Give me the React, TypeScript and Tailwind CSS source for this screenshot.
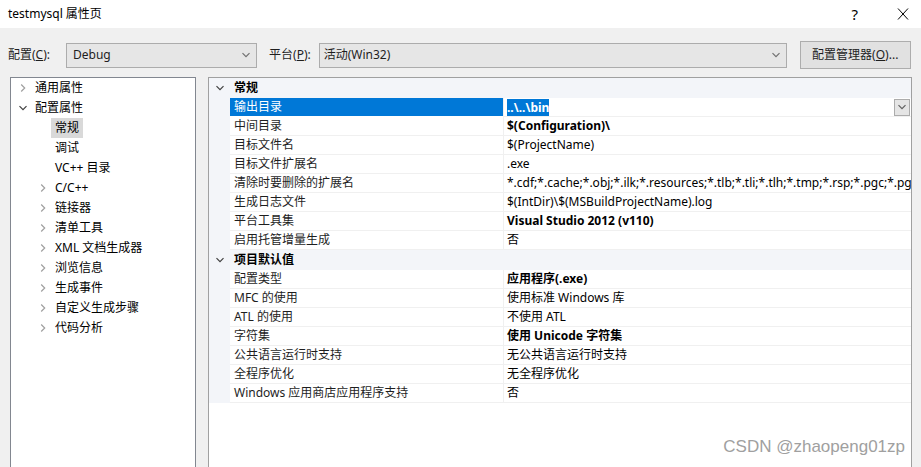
import React from 'react'

const FONT = { fontFamily: '"Noto Sans", "Noto Sans CJK SC", sans-serif' }

function Chevron({ open, className = '' }: { open?: boolean; className?: string }) {
  return (
    <svg width="10" height="10" viewBox="0 0 10 10" className={className} fill="none" stroke="currentColor" strokeWidth={1.2}>
      {open ? <path d="M1.5 3.2 5 6.7 8.5 3.2" /> : <path d="M3.2 1.5 6.7 5 3.2 8.5" />}
    </svg>
  )
}

type TreeItem = { label: string; level: 1 | 2; chevron?: 'open' | 'closed'; selected?: boolean }

const tree: TreeItem[] = [
  { label: '通用属性', level: 1, chevron: 'closed' },
  { label: '配置属性', level: 1, chevron: 'open' },
  { label: '常规', level: 2, selected: true },
  { label: '调试', level: 2 },
  { label: 'VC++ 目录', level: 2 },
  { label: 'C/C++', level: 2, chevron: 'closed' },
  { label: '链接器', level: 2, chevron: 'closed' },
  { label: '清单工具', level: 2, chevron: 'closed' },
  { label: 'XML 文档生成器', level: 2, chevron: 'closed' },
  { label: '浏览信息', level: 2, chevron: 'closed' },
  { label: '生成事件', level: 2, chevron: 'closed' },
  { label: '自定义生成步骤', level: 2, chevron: 'closed' },
  { label: '代码分析', level: 2, chevron: 'closed' },
]

type Prop = { name: string; value: string; bold?: boolean; selected?: boolean }

const groups: { title: string; rows: Prop[] }[] = [
  {
    title: '常规',
    rows: [
      { name: '输出目录', value: '..\\..\\bin', bold: true, selected: true },
      { name: '中间目录', value: '$(Configuration)\\', bold: true },
      { name: '目标文件名', value: '$(ProjectName)' },
      { name: '目标文件扩展名', value: '.exe' },
      { name: '清除时要删除的扩展名', value: '*.cdf;*.cache;*.obj;*.ilk;*.resources;*.tlb;*.tli;*.tlh;*.tmp;*.rsp;*.pgc;*.pgd;*.meta;*.tlog;*.manifest;*.res' },
      { name: '生成日志文件', value: '$(IntDir)\\$(MSBuildProjectName).log' },
      { name: '平台工具集', value: 'Visual Studio 2012 (v110)', bold: true },
      { name: '启用托管增量生成', value: '否' },
    ],
  },
  {
    title: '项目默认值',
    rows: [
      { name: '配置类型', value: '应用程序(.exe)', bold: true },
      { name: 'MFC 的使用', value: '使用标准 Windows 库' },
      { name: 'ATL 的使用', value: '不使用 ATL' },
      { name: '字符集', value: '使用 Unicode 字符集', bold: true },
      { name: '公共语言运行时支持', value: '无公共语言运行时支持' },
      { name: '全程序优化', value: '无全程序优化' },
      { name: 'Windows 应用商店应用程序支持', value: '否' },
    ],
  },
]

export default function App() {
  return (
    <div className="w-[921px] h-[467px] bg-[#f0f0f0] overflow-hidden flex flex-col relative text-[12px] text-[#1e1e1e]" style={FONT}>
      {/* Title bar */}
      <div className="h-[28px] bg-white flex items-center pl-[8px] shrink-0">
        <span className="text-black">testmysql 属性页</span>
        <span className="ml-auto text-[15px] text-black mr-[39px]">?</span>
        <svg width="12" height="12" viewBox="0 0 12 12" className="mr-[12px] text-black" stroke="currentColor" strokeWidth={1}>
          <path d="M1 0.5 11 11.5M11 0.5 1 11.5" />
        </svg>
      </div>

      {/* Config row */}
      <div className="flex items-center h-[28px] mt-[13px] pl-[8px] shrink-0">
        <span>配置(<u>C</u>):</span>
        <div className="ml-[16px] w-[191px] h-[25px] bg-[#e6e6e6] border border-[#acacac] flex items-center pl-[6px] pr-[5px]">
          <span>Debug</span>
          <Chevron open className="ml-auto text-[#707070]" />
        </div>
        <span className="ml-[12px]">平台(<u>P</u>):</span>
        <div className="ml-[8px] w-[468px] h-[25px] bg-[#e6e6e6] border border-[#acacac] flex items-center pl-[4px] pr-[5px]">
          <span>活动(Win32)</span>
          <Chevron open className="ml-auto text-[#707070]" />
        </div>
        <div className="ml-[13px] w-[111px] h-[28px] bg-[#e1e1e1] border border-[#adadad] flex items-center justify-center">
          配置管理器(<u>O</u>)...
        </div>
      </div>

      {/* Main area */}
      <div className="flex mt-[8px] pl-[10px] flex-1 min-h-0">
        {/* Tree */}
        <div className="w-[186px] bg-white border border-[#828790] border-b-0 flex flex-col">
          {tree.map((t) => (
            <div key={t.label} className={`h-[20px] flex items-center ${t.level === 1 ? 'pl-[4px]' : 'pl-[24px]'}`}>
              <div className="w-[16px] flex items-center justify-center text-[#a0a0a0]">
                {t.chevron && <Chevron open={t.chevron === 'open'} className={t.chevron === 'open' ? 'text-[#404040]' : ''} />}
              </div>
              <span className={`px-[4px] h-[20px] leading-[20px] text-black ${t.selected ? 'bg-[#d9d9d9]' : ''}`}>{t.label}</span>
            </div>
          ))}
        </div>

        {/* Property grid */}
        <div className="ml-[12px] w-[704px] bg-white border border-[#a0a0a0] border-b-0 flex flex-col">
          {groups.map((g) => (
            <div key={g.title} className="flex flex-col">
              <div className="h-[20px] flex items-center bg-[#f3f5f9]">
                <div className="w-[21px] flex items-center justify-center text-[#404040]">
                  <Chevron open />
                </div>
                <span className="pl-[4px] font-bold text-black">{g.title}</span>
              </div>
              {g.rows.map((r) => (
                <div key={r.name} className="h-[19px] flex">
                  <div className="w-[21px] bg-[#f3f5f9] shrink-0" />
                  <div className={`w-[273px] shrink-0 flex items-center pl-[4px] ${r.selected ? 'h-[18px] bg-[#0078d7] text-white' : 'border-b border-[#f0f0f0] h-[19px]'}`}>
                    {r.name}
                  </div>
                  <div className="w-px bg-[#f0f0f0] shrink-0" />
                  <div className="flex-1 min-w-0 h-[19px] border-b border-[#f0f0f0] flex items-center pl-[3px] overflow-hidden whitespace-nowrap">
                    <span className={`${r.bold ? 'font-bold' : ''} ${r.selected ? 'bg-[#0078d7] text-white leading-[17px]' : 'text-black'}`}>{r.value}</span>
                    {r.selected && (
                      <div className="ml-auto mr-[1px] w-[16px] h-[17px] bg-[#e5e5e5] border border-[#acacac] flex items-center justify-center text-[#606060]">
                        <Chevron open />
                      </div>
                    )}
                  </div>
                </div>
              ))}
            </div>
          ))}
        </div>
      </div>

      {/* Watermark */}
      <div className="absolute right-[16px] bottom-[8px] text-[17px] text-[#a0a0a0]" style={{ fontFamily: '"Liberation Sans", sans-serif' }}>
        CSDN @zhaopeng01zp
      </div>
    </div>
  )
}
